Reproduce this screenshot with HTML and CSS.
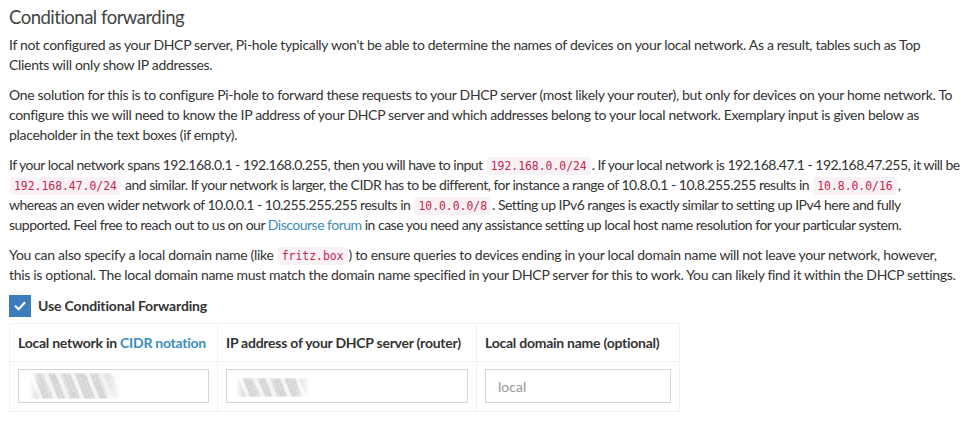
FILE: index.html
```html
<!DOCTYPE html>
<html>
<head>
<meta charset="utf-8">
<link rel="stylesheet" href="styles.css">
</head>
<body>
<div class="box">
  <h3 class="title">Conditional forwarding</h3>
  <p>If not configured as your DHCP server, Pi-hole typically won't be able to determine the names of devices on your local network. As a result, tables such as Top<br>Clients will only show IP addresses.</p>
  <p>One solution for this is to configure Pi-hole to forward these requests to your DHCP server (most likely your router), but only for devices on your home network. To<br>configure this we will need to know the IP address of your DHCP server and which addresses belong to your local network. Exemplary input is given below as<br>placeholder in the text boxes (if empty).</p>
  <p class="numeric">If your local network spans 192.168.0.1 - 192.168.0.255, then you will have to input <code>192.168.0.0/24</code>. If your local network is 192.168.47.1 - 192.168.47.255, it will be<br><code>192.168.47.0/24</code> and similar. If your network is larger, the CIDR has to be different, for instance a range of 10.8.0.1 - 10.8.255.255 results in <code>10.8.0.0/16</code>,<br>whereas an even wider network of 10.0.0.1 - 10.255.255.255 results in <code>10.0.0.0/8</code>. Setting up IPv6 ranges is exactly similar to setting up IPv4 here and fully<br>supported. Feel free to reach out to us on our <a href="#">Discourse forum</a> in case you need any assistance setting up local host name resolution for your particular system.</p>
  <p>You can also specify a local domain name (like <code>fritz.box</code>) to ensure queries to devices ending in your local domain name will not leave your network, however,<br>this is optional. The local domain name must match the domain name specified in your DHCP server for this to work. You can likely find it within the DHCP settings.</p>
  <label class="check">
    <span class="checkbox"><svg width="14" height="14" viewBox="0 0 14 14"><path d="M2.5 7.2 L5.6 10.2 L11.6 3.8" fill="none" stroke="#fff" stroke-width="2" stroke-linecap="round" stroke-linejoin="round"/></svg></span>
    <span class="check-label">Use Conditional Forwarding</span>
  </label>
  <table class="cf">
    <colgroup>
      <col class="w1"><col class="w2"><col class="w3">
    </colgroup>
    <thead>
      <tr>
        <th>Local network in <a href="#">CIDR notation</a></th>
        <th>IP address of your DHCP server (router)</th>
        <th>Local domain name (optional)</th>
      </tr>
    </thead>
    <tbody>
      <tr>
        <td><div class="redact r1"><input class="inp" type="text" aria-label="Local network"></div></td>
        <td><div class="redact r2"><input class="inp" type="text" aria-label="DHCP server"></div></td>
        <td><input class="inp" type="text" placeholder="local"></td>
      </tr>
    </tbody>
  </table>
</div>
</body>
</html>
```
FILE: styles.css
```css
html, body {
  margin: 0;
  padding: 0;
  background: #fff;
}
body {
  font-family: Lato, "Open Sans", sans-serif;
  font-size: 14px;
  line-height: 20px;
  letter-spacing: -0.32px;
  color: #333;
}
.box {
  padding: 0 9px;
}
.title {
  margin: 0;
  padding-top: 5px;
  height: 30px;
  font-size: 18.5px;
  font-weight: 400;
  line-height: 24px;
  letter-spacing: -0.5px;
  color: #444;
}
p {
  margin: 0 0 10px 0;
  white-space: nowrap;
}
p.numeric {
  letter-spacing: -0.5px;
}
code {
  font-family: "DejaVu Sans Mono", "Liberation Mono", monospace;
  font-size: 11.4px;
  line-height: 1;
  letter-spacing: 0;
  color: #c7254e;
  background: #f9f2f4;
  padding: 2px 4px;
  border-radius: 4px;
  margin: 0 1px;
}
a {
  color: #3c8dbc;
  text-decoration: none;
}
.check {
  display: flex;
  align-items: center;
  gap: 7px;
  height: 22px;
  margin-top: 0;
  margin-bottom: 6px;
}
.checkbox {
  width: 22px;
  height: 22px;
  background: #3c7ebc;
  display: flex;
  align-items: center;
  justify-content: center;
}
.check-label {
  font-weight: 700;
  letter-spacing: -0.15px;
}
table.cf {
  border-collapse: collapse;
  table-layout: fixed;
  width: 670px;
  border: 1px solid #f2f2f2;
}
col.w1 { width: 208px; }
col.w2 { width: 259px; }
col.w3 { width: 203px; }
.cf th {
  text-align: left;
  font-weight: 700;
  white-space: nowrap;
  letter-spacing: -0.25px;
  padding: 9px 8px 8px 8px;
  border: 1px solid #f2f2f2;
  line-height: 20px;
}
.cf td {
  padding: 7px 8px 8px 8px;
  border: 1px solid #f2f2f2;
}
.inp {
  display: block;
  box-sizing: border-box;
  width: 100%;
  height: 34px;
  border: 1px solid #d2d6de;
  padding: 6px 12px;
  font-family: inherit;
  font-size: 14px;
  letter-spacing: 0;
  color: #555;
  background: transparent;
  outline: none;
}
.inp::placeholder {
  color: #999;
}
.redact {
  position: relative;
}
.redact::after {
  content: "";
  position: absolute;
  pointer-events: none;
  background:
    repeating-linear-gradient(68deg, rgba(255,255,255,0) 0 9px, rgba(255,255,255,0.8) 9px 13px),
    repeating-linear-gradient(68deg, rgba(140,140,140,0.7) 0 1.5px, rgba(230,230,230,0.3) 1.5px 3.5px);
  filter: blur(1px);
  -webkit-mask-image: linear-gradient(90deg, transparent 0, #000 12%, #000 80%, transparent 100%);
  mask-image: linear-gradient(90deg, transparent 0, #000 12%, #000 80%, transparent 100%);
}
.r1::after {
  left: 11px;
  top: 4px;
  width: 92px;
  height: 26px;
}
.r2::after {
  left: 10px;
  top: 9px;
  width: 74px;
  height: 19px;
}
```
